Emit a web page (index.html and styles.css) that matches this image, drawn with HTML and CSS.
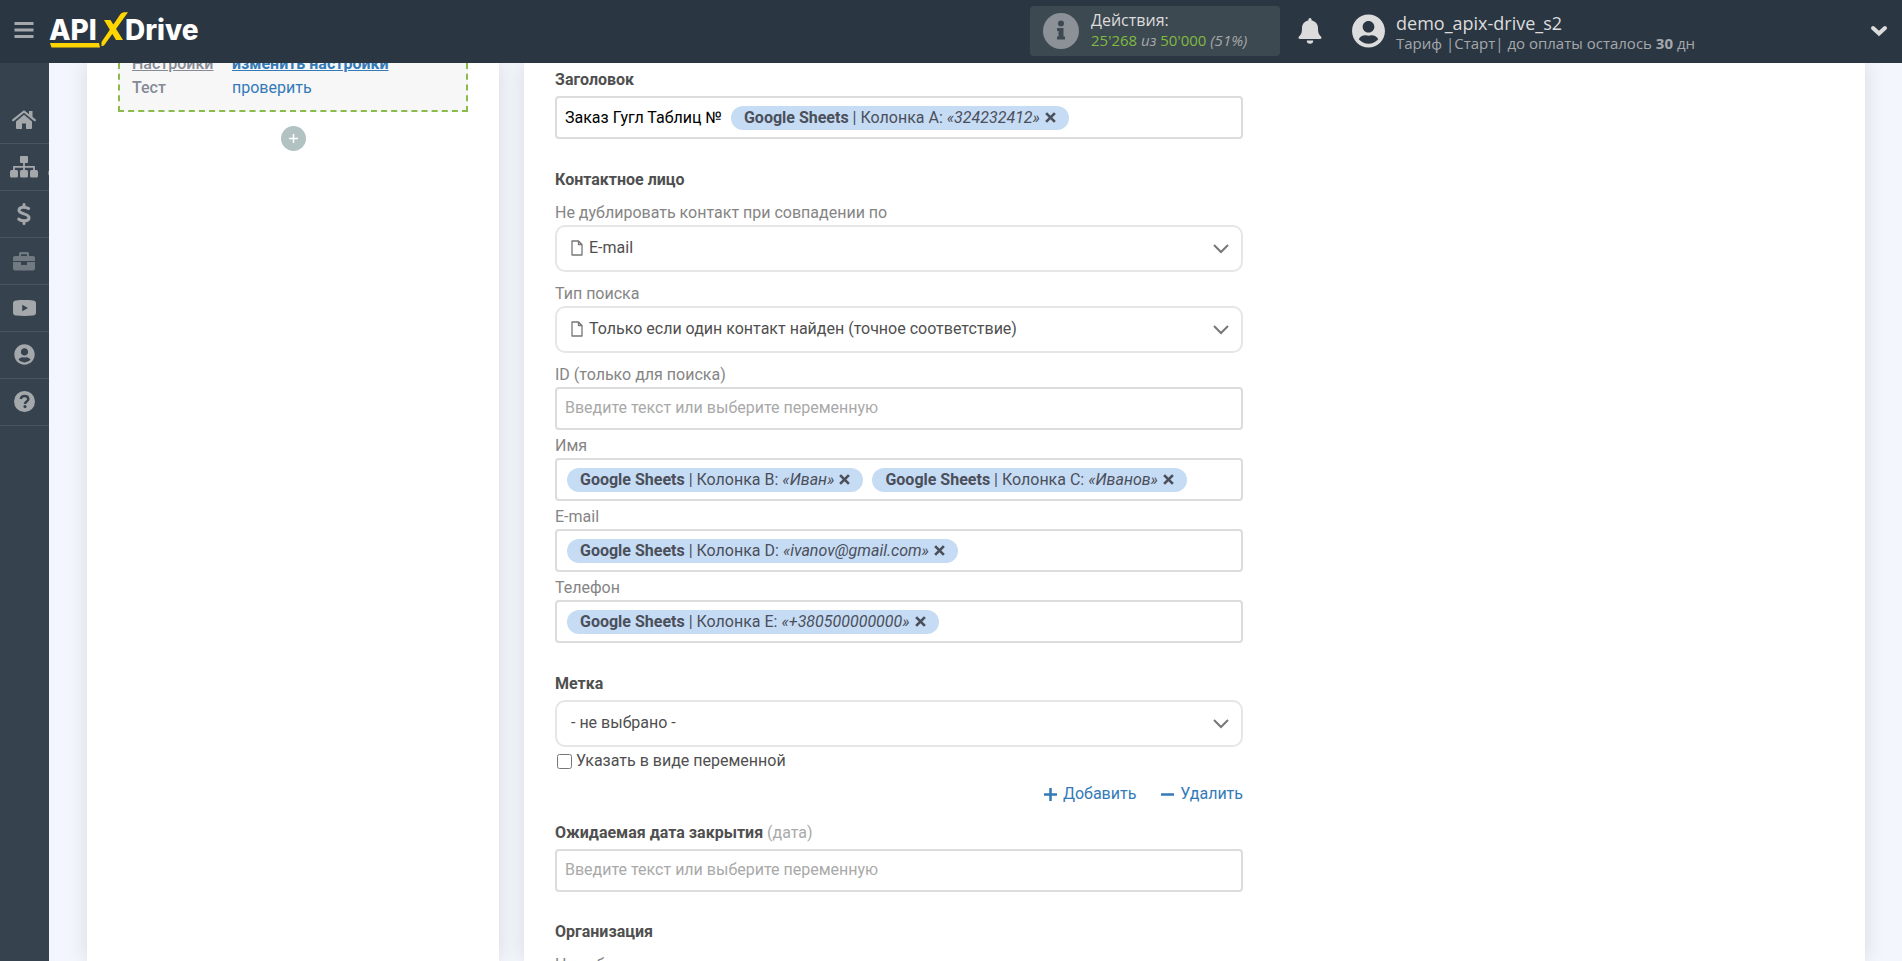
FILE: index.html
```html
<!DOCTYPE html>
<html lang="ru">
<head>
<meta charset="utf-8">
<meta name="viewport" content="width=device-width, initial-scale=1">
<title>ApiX-Drive</title>
<link rel="stylesheet" href="styles.css">
</head>
<body>
<svg class="sprite" aria-hidden="true">
  <symbol id="i-user" viewBox="0 0 496 512"><path fill="currentColor" d="M248 8C111 8 0 119 0 256s111 248 248 248 248-111 248-248S385 8 248 8zm0 96c48.600 0 88 39.400 88 88s-39.400 88-88 88-88-39.400-88-88 39.400-88 88-88zm0 344c-58.700 0-111.300-26.600-146.500-68.200 18.800-35.400 55.600-59.800 98.500-59.800 2.400 0 4.800.4 7.100 1.100 13 4.200 26.600 6.900 40.900 6.900s28-2.700 40.900-6.900c2.300-.7 4.700-1.100 7.100-1.100 42.900 0 79.700 24.400 98.500 59.800C359.300 421.400 306.700 448 248 448z"/></symbol>
  <symbol id="i-times" viewBox="0 0 10 10"><path fill="none" stroke="currentColor" stroke-width="2.400" d="M1 1l8 8M9 1L1 9"/></symbol>
  <symbol id="i-file" viewBox="0 0 12 16"><path fill="none" stroke="currentColor" stroke-width="1.300" stroke-linejoin="round" d="M1 1h6.500L11 4.500V15H1zM7.500 1v3.500H11"/></symbol>
</svg>

<header class="topbar">
  <button class="burger" type="button" aria-label="Меню">
    <svg width="20" height="18" viewBox="0 0 20 18"><path fill="currentColor" d="M.5 0h19v3H.5zM.5 6.500h19v3H.5zM.5 13h19v3H.5z"/></svg>
  </button>
  <a class="logo" href="#" aria-label="ApiX-Drive">
    <svg width="156" height="38" viewBox="0 0 156 38">
      <text class="logo-text" x="0" y="28">API</text>
      <text class="logo-text" x="76" y="28">Drive</text>
      <path fill="#ffd500" d="M1 31h49l1 4.500H2.500zM55 8h6.500L74 28h-7zM71.500 2q1.500-1.800 3.500-1.800h4L55 33.500l-2.500.8V30z"/>
    </svg>
  </a>
  <div class="usage">
    <svg width="36" height="36" viewBox="0 0 36 36"><circle cx="18" cy="18" r="18" fill="currentColor"/><path fill="#3d4951" d="M18 7.500a3 3 0 1 1 0 6 3 3 0 0 1 0-6zM14 15h6.500v8.500H22v3h-8v-3h1.500V18H14z"/></svg>
    <div class="usage-text">
      <div class="usage-title">Действия:</div>
      <div class="usage-value"><b>25'268</b> <i>из</i> <b>50'000</b> <i>(51%)</i></div>
    </div>
  </div>
  <button class="bell" type="button" aria-label="Уведомления">
    <svg width="24" height="26" viewBox="0 0 24 26"><path fill="currentColor" d="M12 0a1.600 1.600 0 0 0-1.600 1.600v1C6.500 3.300 4 6.300 4 10.200c0 5-1.300 6.700-3 8.300-.9 1-.5 2.500 1 2.500h20c1.500 0 1.900-1.500 1-2.500-1.700-1.600-3-3.300-3-8.300 0-3.900-2.500-6.900-6.400-7.600v-1A1.600 1.600 0 0 0 12 0zM8.800 22.600a3.200 3.200 0 0 0 6.400 0z"/></svg>
  </button>
  <a class="account" href="#">
    <svg width="33" height="34"><use href="#i-user"/></svg>
    <span class="account-text">
      <span class="account-name">demo_apix-drive_s2</span>
      <span class="account-plan">Тариф |Старт| до оплаты осталось <b>30</b> дн</span>
    </span>
  </a>
  <button class="more" type="button" aria-label="Ещё">
    <svg width="18" height="12" viewBox="0 0 18 12"><path fill="none" stroke="currentColor" stroke-width="4" stroke-linecap="round" d="M3 3l6 5.500L15 3"/></svg>
  </button>
</header>

<div class="shell">
  <nav class="sidebar" aria-label="Разделы">
    <a href="#" aria-label="Главная"><svg width="24" height="20" viewBox="0 0 24 20"><path fill="none" stroke="currentColor" stroke-width="2.200" stroke-linecap="round" stroke-linejoin="round" d="M1.200 10.200L12 1.500l10.800 8.700"/><path fill="currentColor" d="M17 1h3.500v6.500L17 4.600zM12 4.800l8 6.600V18a1 1 0 0 1-1 1h-5v-5.500h-4V19H5a1 1 0 0 1-1-1v-6.600z"/></svg></a>
    <a class="has-menu" href="#" aria-label="Связи"><svg width="28" height="22" viewBox="0 0 28 22"><path fill="none" stroke="currentColor" stroke-width="1.800" d="M14 6v8M4 15v-4.200h20V15"/><g fill="currentColor"><rect x="10" y="0" width="8" height="7" rx="1"/><rect x="0" y="14" width="8" height="7.500" rx="1.500"/><rect x="10" y="14" width="8" height="7.500" rx="1.500"/><rect x="20" y="14" width="8" height="7.500" rx="1.500"/></g></svg></a>
    <a href="#" aria-label="Оплата"><svg width="14" height="22" viewBox="0 0 14 22"><path fill="none" stroke="currentColor" stroke-width="3" stroke-linecap="round" d="M11.500 5.500C9.500 4 2 3 2 7.300c0 4.500 10 2.700 10 7.400 0 4.200-7.500 3.500-10.200 1.500M7 1.500v2M7 18.500v2"/></svg></a>
    <a class="dim" href="#" aria-label="Портфель"><svg width="22" height="20" viewBox="0 0 22 20"><path fill="currentColor" fill-rule="evenodd" d="M6 5V2.500A1.500 1.500 0 0 1 7.500 1h7A1.500 1.500 0 0 1 16 2.500V5h4a2 2 0 0 1 2 2v3H0V7a2 2 0 0 1 2-2zM8.200 5h5.600V3.200H8.200zM0 11h8v3h6v-3h8v6.500a2 2 0 0 1-2 2H2a2 2 0 0 1-2-2z"/></svg></a>
    <a href="#" aria-label="Видео"><svg width="23" height="16" viewBox="0 0 23 16"><path fill="currentColor" fill-rule="evenodd" d="M3 .4C8 0 15 0 20 .4c2 .2 3 1.200 3 3v9.200c0 1.800-1 2.800-3 3-5 .4-12 .4-17 0-2-.2-3-1.200-3-3V3.400C0 1.600 1 .6 3 .4zM9.200 4.700v6.600L15 8z"/></svg></a>
    <a href="#" aria-label="Профиль"><svg width="21" height="21"><use href="#i-user"/></svg></a>
    <a href="#" aria-label="Помощь"><svg width="21" height="21" viewBox="0 0 21 21"><circle cx="10.500" cy="10.500" r="10.500" fill="currentColor"/><path fill="none" stroke="#37424f" stroke-width="2.500" d="M6.700 8C7.200 6 8.500 5 10.500 5c2.200 0 3.800 1.200 3.800 3 0 2.600-3.300 2.400-3.300 5"/><circle cx="11" cy="15.600" r="1.600" fill="#37424f"/></svg></a>
  </nav>

  <main class="content">
    <aside class="card steps">
      <div class="step-box">
        <div class="step-row current"><a class="step-name" href="#">Настройки</a><a href="#">изменить настройки</a></div>
        <div class="step-row"><span class="step-name">Тест</span><a href="#">проверить</a></div>
      </div>
      <button class="add-step" type="button" aria-label="Добавить шаг"><svg width="9" height="9" viewBox="0 0 9 9"><path stroke="currentColor" stroke-width="1.500" d="M4.500 0v9M0 4.500h9"/></svg></button>
    </aside>

    <form class="card form">
      <section class="group">
        <div class="title" id="l-title">Заголовок</div>
        <div class="field" role="group" aria-labelledby="l-title">
          <span>Заказ Гугл Таблиц №</span>
          <span class="tag"><span><b>Google Sheets</b> | Колонка A: <i>«324232412»</i></span><button type="button" aria-label="Убрать"><svg width="11" height="11"><use href="#i-times"/></svg></button></span>
        </div>
      </section>

      <section class="group contact">
        <div class="title">Контактное лицо</div>
        <label class="label" for="dup">Не дублировать контакт при совпадении по</label>
        <div class="select with-icon"><svg class="file" width="12" height="16"><use href="#i-file"/></svg><select id="dup"><option>E-mail</option></select><svg class="arrow" width="16" height="10" viewBox="0 0 16 10"><path d="M1 1l7 7 7-7"/></svg></div>
        <label class="label" for="search">Тип поиска</label>
        <div class="select with-icon"><svg class="file" width="12" height="16"><use href="#i-file"/></svg><select id="search"><option>Только если один контакт найден (точное соответствие)</option></select><svg class="arrow" width="16" height="10" viewBox="0 0 16 10"><path d="M1 1l7 7 7-7"/></svg></div>
        <label class="label" for="cid">ID (только для поиска)</label>
        <input class="field" id="cid" type="text" placeholder="Введите текст или выберите переменную">
        <div class="label" id="l-name">Имя</div>
        <div class="field" role="group" aria-labelledby="l-name">
          <span class="tag"><span><b>Google Sheets</b> | Колонка B: <i>«Иван»</i></span><button type="button" aria-label="Убрать"><svg width="11" height="11"><use href="#i-times"/></svg></button></span>
          <span class="tag"><span><b>Google Sheets</b> | Колонка C: <i>«Иванов»</i></span><button type="button" aria-label="Убрать"><svg width="11" height="11"><use href="#i-times"/></svg></button></span>
        </div>
        <div class="label" id="l-mail">E-mail</div>
        <div class="field" role="group" aria-labelledby="l-mail">
          <span class="tag"><span><b>Google Sheets</b> | Колонка D: <i>«ivanov@gmail.com»</i></span><button type="button" aria-label="Убрать"><svg width="11" height="11"><use href="#i-times"/></svg></button></span>
        </div>
        <div class="label" id="l-phone">Телефон</div>
        <div class="field" role="group" aria-labelledby="l-phone">
          <span class="tag"><span><b>Google Sheets</b> | Колонка E: <i>«+380500000000»</i></span><button type="button" aria-label="Убрать"><svg width="11" height="11"><use href="#i-times"/></svg></button></span>
        </div>
      </section>

      <section class="group marks">
        <label class="title" for="mark">Метка</label>
        <div class="select"><select id="mark"><option>- не выбрано -</option></select><svg class="arrow" width="16" height="10" viewBox="0 0 16 10"><path d="M1 1l7 7 7-7"/></svg></div>
        <div class="check"><input id="asvar" type="checkbox"><label for="asvar">Указать в виде переменной</label></div>
        <div class="actions">
          <a href="#"><svg width="13" height="13" viewBox="0 0 13 13"><path stroke="currentColor" stroke-width="2.500" d="M6.500 0v13M0 6.500h13"/></svg>Добавить</a>
          <a href="#"><svg width="13" height="13" viewBox="0 0 13 13"><path stroke="currentColor" stroke-width="2.500" d="M0 6.500h13"/></svg>Удалить</a>
        </div>
      </section>

      <section class="group date">
        <label class="title" for="close">Ожидаемая дата закрытия <span class="hint">(дата)</span></label>
        <input class="field" id="close" type="text" placeholder="Введите текст или выберите переменную">
      </section>

      <section class="group contact">
        <div class="title">Организация</div>
        <label class="label" for="orgdup">Не дублировать</label>
        <div class="select"><select id="orgdup"><option>- не выбрано -</option></select></div>
      </section>
    </form>
  </main>
</div>
</body>
</html>
```
FILE: styles.css
```css
* { box-sizing: border-box; }
html, body { height: 100%; }
body {
  margin: 0;
  display: flex;
  flex-direction: column;
  overflow: hidden;
  background: #f3f7fd;
  color: #4f4f4f;
  font: 16px/22px Roboto, "Noto Sans", sans-serif;
}
button { border: 0; padding: 0; background: none; color: inherit; font: inherit; cursor: pointer; }
a { color: #337ab7; text-decoration: none; }
svg { display: block; flex: none; }
b { font-weight: 700; }
.sprite { position: absolute; width: 0; height: 0; }

.topbar {
  flex: none;
  display: flex;
  align-items: center;
  height: 63px;
  padding: 0 14px 1px;
  background: #2b3643;
  color: #dcdcdc;
  font-family: "Open Sans", "Noto Sans", sans-serif;
}
.burger { color: #a5a8ab; }
.logo { margin-left: 15px; }
.logo-text { font: 800 28px Inter, sans-serif; fill: #fff; }
.usage {
  display: flex;
  align-items: center;
  gap: 12px;
  width: 250px;
  height: 50px;
  margin-left: auto;
  padding: 0 13px;
  border-radius: 4px;
  background: #3d4951;
  color: #8b9197;
}
.usage-text { padding-bottom: 2px; }
.usage-title { color: #dcdcdc; line-height: 20px; }
.usage-value { font-size: 15px; line-height: 20px; color: #a5a8ab; }
.usage-value b { font-weight: 400; color: #7fb942; }
.bell { margin: 0 30px 0 18px; }
.account { display: flex; align-items: center; gap: 11px; color: #dcdcdc; }
.account-text { display: flex; flex-direction: column; padding-top: 4px; }
.account-name { font-size: 18px; line-height: 20px; }
.account-plan { font-size: 15px; line-height: 20px; color: #a5a8ab; }
.more { margin-left: 175px; }

.shell { flex: 1; display: flex; min-height: 0; }
.sidebar {
  flex: none;
  width: 49px;
  padding-top: 34px;
  background: #37424f;
}
.sidebar a {
  position: relative;
  display: flex;
  align-items: center;
  justify-content: center;
  height: 47px;
  padding: 0 1px 1px 0;
  border-bottom: 1px solid #4a5562;
  color: #a5a8ab;
}
.sidebar .dim { color: #717981; }
.has-menu::after {
  content: "";
  position: absolute;
  right: 0;
  bottom: 15px;
  width: 1px;
  height: 4px;
  background: #717981;
}

.content {
  flex: 1;
  display: flex;
  gap: 25px;
  padding: 0 37px 0 38px;
  overflow: hidden;
}
.card { background: #fff; box-shadow: 0 0 20px rgba(0, 0, 0, 0.12); }
.steps { flex: none; width: 412px; padding: 0 31px; }
.step-box {
  height: 49px;
  padding: 0 12px 10px;
  border: 2px dashed #8bbb4c;
  border-top: 0;
  background: #f7f7f7;
  display: flex;
  flex-direction: column;
  justify-content: flex-end;
}
.step-row { display: flex; flex: none; line-height: 24px; }
.step-name { width: 100px; color: #858a94; font-weight: 500; }
.current { font-weight: 700; }
.current a { text-decoration: underline; }
.add-step {
  display: flex;
  align-items: center;
  justify-content: center;
  width: 25px;
  height: 25px;
  margin: 14px auto 0;
  border-radius: 50%;
  background: #b2c2c3;
  color: #fff;
}

.form { flex: 1; padding: 4px 31px 0; }
.group { max-width: 688px; margin-bottom: 28px; }
.title { display: block; margin-bottom: 3px; font-weight: 700; line-height: 26px; }
.contact .title { margin-bottom: 6px; }
.label { display: block; padding-top: 2px; line-height: 24px; color: #858585; }
.hint { font-weight: 400; color: #aaa; }
.field {
  display: flex;
  align-items: center;
  gap: 9px;
  width: 100%;
  height: 43px;
  padding: 0 8px;
  border: 2px solid #dcdcdc;
  border-radius: 4px;
  background: #fff;
  color: #000;
  font: inherit;
}
input.field { padding-bottom: 3px; }
.field + .label { margin-top: 2px; }
.field::placeholder { color: #a9a9a9; opacity: 1; }
.tag {
  display: flex;
  align-items: center;
  gap: 5px;
  height: 24px;
  padding: 0 13px;
  border-radius: 12px;
  background: #c6dcf5;
  color: #4b4f5a;
}
.tag:first-child { margin-left: 2px; }
.select {
  display: flex;
  align-items: center;
  height: 47px;
  border: 2px solid #e6e6e6;
  border-radius: 10px;
}
.select + .label { margin-top: 8px; }
.select select {
  flex: 1;
  height: 100%;
  padding: 0 40px 2px 14px;
  border: 0;
  background: none;
  color: #4f4f4f;
  font: inherit;
  appearance: none;
}
.select .file { margin: 0 -32px 2px 14px; color: #777; }
.select.with-icon select { padding-left: 32px; margin-left: 6px; }
.select .arrow { margin: 0 12px 0 -28px; fill: none; stroke: #777; stroke-width: 2; pointer-events: none; }
.check { display: flex; align-items: center; gap: 3px; margin-top: 3px; }
.check input { width: 15px; height: 15px; margin: 0 1px 0 2px; }
.actions { display: flex; justify-content: flex-end; gap: 25px; margin-top: 11px; }
.actions a { display: flex; align-items: center; gap: 6px; }
.marks { margin-bottom: 15px; }
.date { margin-bottom: 27px; }
```
